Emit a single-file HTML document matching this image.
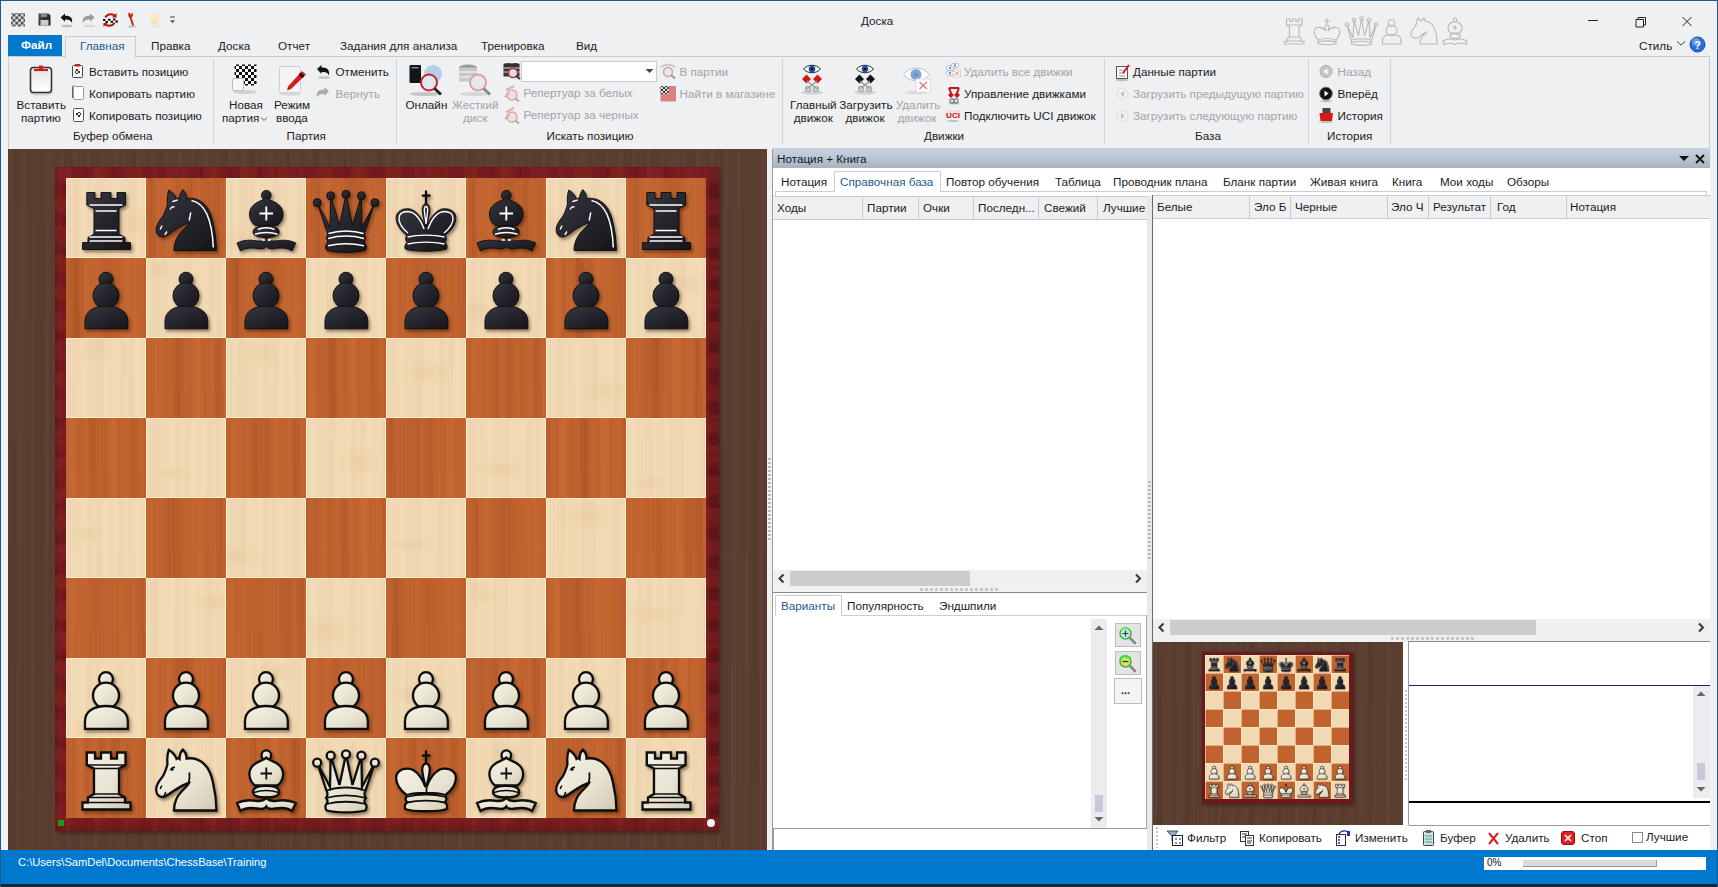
<!DOCTYPE html>
<html><head><meta charset="utf-8"><title>Доска</title>
<style>
*{margin:0;padding:0;box-sizing:border-box}
html,body{width:1718px;height:887px;overflow:hidden}
body{position:relative;background:#eff0f2;font-family:"Liberation Sans",sans-serif;font-size:11.7px;color:#1c1c1c;line-height:1}
.a{position:absolute}
.t{position:absolute;white-space:nowrap;margin-top:-0.7px}
.g{color:#a3a3a9}
/* window border */
#wb{left:0;top:0;width:1718px;height:887px;border:1px solid #1a5a8c;border-bottom:none;pointer-events:none;z-index:50}
/* ribbon */
#ribbon{left:8px;top:56px;width:1702px;height:93px;border:1px solid #c9cad2;border-bottom:none;background:#eff0f2}
.sep{position:absolute;top:66px;width:1px;height:78px;background:#d2d3da}
.glab{position:absolute;top:130px;white-space:nowrap;text-align:center}
/* wood */
.wood{background-color:#5a3d2f;background-image:repeating-linear-gradient(90deg,rgba(0,0,0,.035) 0 1px,transparent 1px 3px,rgba(255,220,190,.02) 3px 4px,transparent 4px 7px),repeating-linear-gradient(90.5deg,rgba(255,225,190,.02) 0 5px,transparent 5px 13px),repeating-linear-gradient(89.5deg,rgba(20,5,0,.035) 0 9px,transparent 9px 31px)}
#board{left:66px;top:178px;width:640px;height:640px;background-color:#f1d9b3;background-image:repeating-linear-gradient(90deg,rgba(190,140,90,.06) 0 1px,transparent 1px 5px,rgba(255,255,255,.07) 5px 7px,transparent 7px 11px),repeating-linear-gradient(91deg,rgba(200,150,110,.05) 0 13px,transparent 13px 29px)}
.sq{position:absolute;width:80px;height:80px}
.D{background-color:#c0632f;background-image:repeating-linear-gradient(90deg,rgba(110,30,0,.06) 0 2px,transparent 2px 7px,rgba(255,180,110,.05) 7px 9px,transparent 9px 13px),repeating-linear-gradient(89deg,rgba(255,170,100,.06) 0 9px,transparent 9px 23px,rgba(100,30,0,.07) 23px 31px,transparent 31px 43px)}
.pc{position:absolute;width:80px;height:80px}
.L{box-shadow:inset 0 0 0 1px rgba(255,243,210,.75)}
/* status */
#status{left:0;top:850px;width:1718px;height:34px;background:#0078ce}
#status2{left:0;top:884px;width:1718px;height:3px;background:#14283a}
</style></head><body>
<div class="a" id="wb"></div>

<!-- TITLE -->
<div class="t" style="left:861px;top:16px;font-size:11.7px">Доска</div>


<!-- QUICK ACCESS -->
<svg class="a" style="left:10px;top:11px" width="170" height="18" viewBox="0 0 170 18">
 <defs><pattern id="chk" width="4" height="4" patternUnits="userSpaceOnUse"><rect width="4" height="4" fill="#e8e8e8"/><rect width="2" height="2" fill="#333"/><rect x="2" y="2" width="2" height="2" fill="#333"/></pattern>
 <pattern id="chk3" width="6" height="6" patternUnits="userSpaceOnUse"><rect width="6" height="6" fill="#fff"/><rect width="3" height="3" fill="#111"/><rect x="3" y="3" width="3" height="3" fill="#111"/></pattern>
 <pattern id="chkq" width="5.4" height="5.4" patternUnits="userSpaceOnUse"><rect width="5.4" height="5.4" fill="#d6d6d6"/><rect width="2.7" height="2.7" fill="#555"/><rect x="2.7" y="2.7" width="2.7" height="2.7" fill="#555"/></pattern>
 <linearGradient id="flop" x1="0" y1="0" x2="1" y2="1"><stop offset="0" stop-color="#555"/><stop offset="1" stop-color="#111"/></linearGradient></defs>
 <rect x="1" y="2" width="14" height="13.5" fill="url(#chkq)"/>
 <path d="M28.5 2.5 H38.5 L40.5 4.5 V14.5 H28.5 Z" fill="url(#flop)"/><rect x="31" y="2.5" width="6" height="3.5" fill="#888"/><rect x="30.5" y="9" width="8" height="5.5" fill="#ccc"/>
 <path d="M50.5 6.5 L55 2.5 V4.8 C60 4.5 63 7 62 12 C61 9.5 58 8.3 55 8.7 V10.8 Z" fill="#111"/><ellipse cx="57" cy="15" rx="5.5" ry="1.3" fill="#000" opacity=".22"/>
 <path d="M84.5 6.5 L80 2.5 V4.8 C75 4.5 72 7 73 12 C74 9.5 77 8.3 80 8.7 V10.8 Z" fill="#9a9a9a"/><ellipse cx="79" cy="15" rx="5.5" ry="1.3" fill="#000" opacity=".1"/>
 <path d="M94.5 6 C96 2.5 101 1 105 3.5 L106.5 2 L106.5 6.5 L102 6.5 L103.5 5 C100.5 3.5 97.5 4.5 96.5 7 Z M105.5 12 C104 15.5 99 17 95 14.5 L93.5 16 L93.5 11.5 L98 11.5 L96.5 13 C99.5 14.5 102.5 13.5 103.5 11 Z" fill="#c41010"/>
 <path d="M92.5 8 L108.5 7 L109 11 L93 12 Z" fill="#fff"/><path d="M93 8 h2.5 v2 h-2.5z M98 7.8 h2.5 v2 h-2.5z M103 7.5 h2.5 v2 h-2.5z M95.5 10 h2.5 v2 h-2.5z M100.5 9.8 h2.5 v2 h-2.5z M105.5 9.5 h2.5 v2 h-2.5z" fill="#111"/>
 <path d="M118.5 2 L120 1.5 L120.5 4 L121.5 3.5 L121.8 1.5 L123 2.5 C123 4.5 122.5 6 121.5 6.5 L124 14 L122.2 14.8 L119.8 7 C118.5 6.5 118 4 118.5 2 Z" fill="#c81818"/><ellipse cx="122" cy="15.5" rx="4" ry="1" fill="#000" opacity=".2"/>
 <circle cx="144.7" cy="7" r="5" fill="#f6e9c4"/><path d="M141.5 10 L142.5 14 H147 L148 10 Z" fill="#f2e2b4"/><ellipse cx="144.7" cy="15.5" rx="6" ry=".8" fill="#000" opacity=".06"/>
 <path d="M160 6 H165" stroke="#555" stroke-width="1.1"/><path d="M160 9.3 H165 L162.5 12.2 Z" fill="#555"/>
</svg>
<!-- ghost pieces -->
<svg class="a" style="left:1283px;top:16px" width="190" height="30" viewBox="0 0 190 30" fill="none" stroke="#b9b9bc" stroke-width="1.1">
 <path d="M3.5 3 H7 V5.5 H9.5 V3 H13 V5.5 H15.5 V3 H19 V9 L16 11 V21 L18.5 23 V25.5 H21 V28 H1.5 V25.5 H4 V23 L6.5 21 V11 L3.5 9 Z M4 9 H18.5 M6.5 21 H16 M4 25 H18.5"/>
 <path d="M44 2 V9 M41 5 H47 M44 9 C46 9 46.5 12 45 15 C48 11 54 10 56 13 C58 16 56 20 53 24 V27.5 C46 29.5 42 29.5 35 27.5 V24 C32 20 30 16 32 13 C34 10 40 11 43 15 C41.5 12 42 9 44 9 Z M35 24 C41 22 47 22 53 24 M35 26 C41 24.5 47 24.5 53 26"/>
 <path d="M64 9 L70 22 L71 4.5 L75.5 19.5 L78.5 3 L81.5 19.5 L86 4.5 L87 22 L93 9 L88.5 25 V28 C81 30 76 30 68.5 28 V25 Z M69 24 C75 22.5 82 22.5 88 24 M69 26.5 C75 25 82 25 88 26.5"/>
 <circle cx="64" cy="8.5" r="1.8"/><circle cx="71" cy="4" r="1.8"/><circle cx="78.5" cy="2.5" r="1.8"/><circle cx="86" cy="4" r="1.8"/><circle cx="93" cy="8.5" r="1.8"/>
 <circle cx="108.5" cy="7" r="3.3"/><circle cx="108.5" cy="14.5" r="5.5"/><path d="M99.5 28 V24 C99.5 20 104 18.5 108.5 18.5 C113 18.5 118 20 118 24 V28 Z"/>
 <path d="M137 28 C137 23 140 19 144 16 C141 17 138 19 135 22 C132 23 128 21 128 18 C128 15 131 12 133 9 C134 6 134 4 135 2 L138 5 L141 2 L142 5 C150 6 154 14 154 28 Z"/>
 <circle cx="172" cy="4" r="1.8"/><path d="M167.5 17 C164 14 164 9 168.5 6.5 L172 5.5 L175.5 6.5 C180 9 180 14 176.5 17 Z M172 9 V14 M169.5 11.5 H174.5 M167 19 C170 17.5 174 17.5 177 19 V21 C174 22.5 170 22.5 167 21 Z M160 25 C164 22.5 168 22.5 172 24 C176 22.5 180 22.5 184 25 L183 28.5 C179 27 175 27 172 28.5 C169 27 165 27 161 28.5 Z"/>
</svg>
<!-- window controls -->
<svg class="a" style="left:1585px;top:14px" width="110" height="14" viewBox="0 0 110 14" stroke="#222" stroke-width="1" fill="none">
 <path d="M3 6.5 H13"/>
 <path d="M51 5.5 H58.5 V13 H51 Z M53 5.5 V3.5 H60.5 V11 H58.5"/>
 <path d="M97.5 3 L106.5 12 M106.5 3 L97.5 12"/>
</svg>
<div class="t" style="left:1639px;top:40.5px">Стиль</div>
<svg class="a" style="left:1676px;top:40px" width="10" height="7"><path d="M1 1.5 L5 5 L9 1.5" stroke="#444" stroke-width="1" fill="none"/></svg>
<svg class="a" style="left:1689px;top:36px" width="17" height="17" viewBox="0 0 17 17"><circle cx="8.5" cy="8.5" r="7.5" fill="#2a6ed8" stroke="#1a4aa0" stroke-width="1"/><circle cx="7" cy="6" r="4" fill="#9ec4ff" opacity=".5"/><text x="8.5" y="12.6" font-family="Liberation Sans" font-weight="bold" font-size="11" fill="#fff" text-anchor="middle">?</text></svg>

<!-- TABS -->
<div class="a" style="left:8px;top:35px;width:54px;height:21px;background:#0078ce;border-top:1px solid #1a70b0"></div>
<div class="t" style="left:21px;top:40px;color:#fff;font-weight:bold">Файл</div>
<div class="a" style="left:65px;top:36px;width:71px;height:22px;border:1px solid #c9cad2;border-bottom:none;background:#eff0f2;z-index:2"></div>
<div class="t" style="left:80px;top:41px;color:#1e5b94;z-index:3">Главная</div>
<div class="t" style="left:151px;top:41px">Правка</div>
<div class="t" style="left:218px;top:41px">Доска</div>
<div class="t" style="left:278px;top:41px">Отчет</div>
<div class="t" style="left:340px;top:41px">Задания для анализа</div>
<div class="t" style="left:481px;top:41px">Тренировка</div>
<div class="t" style="left:576px;top:41px">Вид</div>

<div class="a" id="ribbon"></div>


<!-- RIBBON CONTENT -->
<div class="a" style="left:9px;top:148px;width:1700px;height:1px;background:#f2f2f5"></div>
<div class="sep" style="left:213px;top:59px;height:85px"></div>
<div class="sep" style="left:396px;top:59px;height:85px"></div>
<div class="sep" style="left:782px;top:59px;height:85px"></div>
<div class="sep" style="left:1104px;top:59px;height:85px"></div>
<div class="sep" style="left:1308px;top:59px;height:85px"></div>
<div class="sep" style="left:1390px;top:59px;height:85px"></div>

<!-- group 1 -->
<svg class="a" style="left:26px;top:64px" width="30" height="32" viewBox="0 0 30 32">
 <ellipse cx="15" cy="29.5" rx="12" ry="2" fill="#000" opacity=".12"/>
 <rect x="4.5" y="3.5" width="21" height="25" rx="3" fill="#f6f6f6" stroke="#333" stroke-width="1.6"/>
 <rect x="6.5" y="5.5" width="17" height="21" rx="1.5" fill="url(#gclip)"/>
 <path d="M8 6 H22" stroke="#c82020" stroke-width="2.2"/><rect x="13" y="1.5" width="4" height="4" fill="#c82020"/>
 <defs><linearGradient id="gclip" x1="0" y1="0" x2="0" y2="1"><stop offset="0" stop-color="#e6e6e6"/><stop offset="1" stop-color="#fff"/></linearGradient></defs>
</svg>
<div class="t" style="left:16.5px;top:100px">Вставить</div>
<div class="t" style="left:21px;top:113px">партию</div>
<svg class="a" style="left:70px;top:63px" width="16" height="60" viewBox="0 0 16 60">
 <rect x="2.5" y="2.5" width="10" height="12" rx="1" fill="#fff" stroke="#444" stroke-width="1"/><rect x="5" y="1" width="5" height="2.5" fill="#c82020"/><rect x="5" y="6" width="5" height="5" fill="url(#chk)"/>
 <rect x="3.5" y="23.5" width="10" height="13" rx="1" fill="#fff" stroke="#999" stroke-width="1"/><path d="M2.5 35 V24 C2.5 23 3 22.5 4 22.5" stroke="#666" fill="none"/>
 <rect x="3.5" y="45.5" width="10" height="13" rx="1" fill="#fff" stroke="#555" stroke-width="1"/><rect x="6" y="49" width="5" height="5" fill="url(#chk)"/>
</svg>
<div class="t" style="left:89px;top:66.5px">Вставить позицию</div>
<div class="t" style="left:89px;top:88.5px">Копировать партию</div>
<div class="t" style="left:89px;top:110.5px">Копировать позицию</div>
<div class="t" style="left:73px;top:130.5px">Буфер обмена</div>

<!-- group 2 -->
<svg class="a" style="left:230px;top:63px" width="30" height="32" viewBox="0 0 30 32">
 <ellipse cx="15" cy="29" rx="12" ry="2" fill="#000" opacity=".12"/>
 <rect x="4.5" y="1.5" width="22" height="21" fill="url(#chk3)"/>
 <rect x="2.5" y="15.5" width="11" height="12" rx="1.5" fill="#f8f8f8" stroke="#bbb"/>
</svg>
<div class="t" style="left:229px;top:100px">Новая</div>
<div class="t" style="left:222px;top:113px">партия</div>
<svg class="a" style="left:260px;top:116px" width="8" height="6"><path d="M1 1.5 L4 4.5 L7 1.5" stroke="#555" stroke-width="1" fill="none"/></svg>
<svg class="a" style="left:276px;top:64px" width="32" height="32" viewBox="0 0 32 32">
 <ellipse cx="14" cy="30" rx="11" ry="1.6" fill="#000" opacity=".1"/>
 <rect x="3.5" y="2.5" width="21" height="26" rx="2" fill="#f4f4f4" stroke="#cfcfcf"/>
 <path d="M26 7 L30 10.5 L15 25 L11 26.5 L12 22.5 Z" fill="#d81818"/><path d="M23.5 9.5 L27.5 13" stroke="#111" stroke-width="2.5"/>
</svg>
<div class="t" style="left:274px;top:100px">Режим</div>
<div class="t" style="left:276px;top:113px">ввода</div>
<svg class="a" style="left:315px;top:63px" width="16" height="36" viewBox="0 0 16 36">
 <path d="M2 6 L6.5 2 V4.5 C12 4 15 7 14 12.5 C13 9.5 10 8.5 6.5 9 V11 Z" fill="#111"/><ellipse cx="9" cy="14.5" rx="6" ry="1.3" fill="#000" opacity=".2"/>
 <path d="M14 28 L9.5 24 V26.5 C4 26 1 29 2 34.5 C3 31.5 6 30.5 9.5 31 V33 Z" fill="#aaa"/>
</svg>
<div class="t" style="left:335.5px;top:66.5px">Отменить</div>
<div class="t g" style="left:335.5px;top:88.5px">Вернуть</div>
<div class="t" style="left:286.5px;top:130.5px">Партия</div>

<!-- group 3 -->
<svg class="a" style="left:405px;top:63px" width="42" height="34" viewBox="0 0 42 34">
 <ellipse cx="20" cy="31" rx="15" ry="2" fill="#000" opacity=".18"/>
 <rect x="4.5" y="2" width="11.5" height="18" rx="1" fill="#151515"/><rect x="6.5" y="4" width="7" height="1.5" fill="#6a8ab0"/>
 <circle cx="28" cy="11" r="9" fill="#a8c4e8" opacity=".8"/>
 <circle cx="24" cy="19.5" r="8" fill="#dfe6f0" stroke="#c02828" stroke-width="2"/><path d="M29.5 25.5 L36 31.5" stroke="#222" stroke-width="3"/>
</svg>
<div class="t" style="left:405.5px;top:100px">Онлайн</div>
<svg class="a" style="left:455px;top:63px" width="42" height="34" viewBox="0 0 42 34">
 <ellipse cx="20" cy="31" rx="15" ry="2" fill="#000" opacity=".1"/>
 <ellipse cx="13" cy="4.5" rx="9" ry="3" fill="#999"/><rect x="4" y="4.5" width="18" height="14" fill="#c8c8c8"/><path d="M4 9 H22 M4 14 H22" stroke="#fff" stroke-width="1"/>
 <circle cx="23" cy="19.5" r="8" fill="#e6e8ee" stroke="#e0a0a0" stroke-width="2"/><path d="M28.5 25.5 L35 31.5" stroke="#888" stroke-width="3"/>
</svg>
<div class="t g" style="left:452px;top:100px">Жесткий</div>
<div class="t g" style="left:463px;top:113px">диск</div>
<svg class="a" style="left:502px;top:62px" width="20" height="64" viewBox="0 0 20 64">
 <ellipse cx="6" cy="2.5" rx="4.5" ry="1.5" fill="#333"/><rect x="1.5" y="2.5" width="9" height="12" fill="#333"/><path d="M1.5 6 H10.5 M1.5 10 H10.5" stroke="#ddd"/>
 <ellipse cx="13" cy="2.5" rx="4.5" ry="1.5" fill="#333"/><rect x="8.5" y="2.5" width="9" height="12" fill="#333"/><path d="M8.5 6 H17.5 M8.5 10 H17.5" stroke="#ddd"/>
 <circle cx="11" cy="11" r="4.5" fill="#dde" stroke="#c03030" stroke-width="1.5"/><path d="M14 14 L18 17" stroke="#333" stroke-width="2"/>
 <circle cx="10" cy="33" r="5" fill="#f0e0e0" stroke="#e0a8a8" stroke-width="1.5"/><path d="M4 28 L12 24 M3 35 L7 31" stroke="#d8b0b0" stroke-width="2"/><path d="M13.5 36.5 L17 39.5" stroke="#aaa" stroke-width="2"/>
 <circle cx="10" cy="55" r="5" fill="#f0e0e0" stroke="#e0a8a8" stroke-width="1.5"/><path d="M4 50 L12 46 M3 57 L7 53" stroke="#d8b0b0" stroke-width="2"/><path d="M13.5 58.5 L17 61.5" stroke="#aaa" stroke-width="2"/>
</svg>
<div class="a" style="left:521px;top:61px;width:136px;height:21px;background:#fff;border:1px solid #c8c8ce"></div>
<svg class="a" style="left:645px;top:68px" width="9" height="6"><path d="M0.5 1 H8.5 L4.5 5 Z" fill="#444"/></svg>
<div class="t g" style="left:523.5px;top:88px">Репертуар за белых</div>
<div class="t g" style="left:523.5px;top:110px">Репертуар за черных</div>
<svg class="a" style="left:659px;top:63px" width="18" height="40" viewBox="0 0 18 40">
 <path d="M2 4 C6 1 12 1 16 4" stroke="#c8c8c8" stroke-width="2" fill="none"/><circle cx="9" cy="9" r="4.5" fill="#e8e8f0" stroke="#e0a0a0" stroke-width="1.5"/><path d="M12 12 L16 15.5" stroke="#999" stroke-width="2"/>
 <rect x="1.5" y="23" width="15.5" height="15.5" fill="#d98284"/><rect x="1.5" y="23" width="8" height="8" fill="url(#chk)"/>
</svg>
<div class="t g" style="left:679.5px;top:66.5px">В партии</div>
<div class="t g" style="left:679.5px;top:88.5px">Найти в магазине</div>
<div class="t" style="left:546.5px;top:130.5px">Искать позицию</div>

<!-- group 4 -->
<svg class="a" style="left:798px;top:62px" width="150" height="34" viewBox="0 0 150 34">
 <ellipse cx="14" cy="30.5" rx="11" ry="2" fill="#000" opacity=".13"/>
 <path d="M5.5 7 C10 2 18 2 22.5 7 C18 12 10 12 5.5 7 Z" fill="#fff" stroke="#222" stroke-width="1"/><circle cx="14" cy="7" r="3.3" fill="#1d4fa0"/><circle cx="14" cy="7" r="1.2" fill="#000"/>
 <path d="M4 17 L8.5 12.5 L13 17 L8.5 21.5 Z M15 17 L19.5 12.5 L24 17 L19.5 21.5 Z" fill="#d01818"/>
 <path d="M9 19 L19 27 M19 19 L9 27" stroke="#999" stroke-width="1.5"/><circle cx="10" cy="27" r="2.4" fill="none" stroke="#aaa" stroke-width="1.5"/><circle cx="18" cy="27" r="2.4" fill="none" stroke="#aaa" stroke-width="1.5"/>
 <g transform="translate(53 0)">
 <ellipse cx="14" cy="30.5" rx="11" ry="2" fill="#000" opacity=".13"/>
 <path d="M5.5 7 C10 2 18 2 22.5 7 C18 12 10 12 5.5 7 Z" fill="#fff" stroke="#222" stroke-width="1"/><circle cx="14" cy="7" r="3.3" fill="#1d4fa0"/><circle cx="14" cy="7" r="1.2" fill="#000"/>
 <path d="M4 17 L8.5 12.5 L13 17 L8.5 21.5 Z M15 17 L19.5 12.5 L24 17 L19.5 21.5 Z" fill="#151515"/>
 <path d="M9 19 L19 27 M19 19 L9 27" stroke="#999" stroke-width="1.5"/><circle cx="10" cy="27" r="2.4" fill="none" stroke="#aaa" stroke-width="1.5"/><circle cx="18" cy="27" r="2.4" fill="none" stroke="#aaa" stroke-width="1.5"/>
 </g>
 <g transform="translate(103 0)">
 <ellipse cx="15" cy="30.5" rx="11" ry="2" fill="#000" opacity=".08"/>
 <path d="M2.5 12.5 C9 4 22 4 28.5 12.5 C22 21 9 21 2.5 12.5 Z" fill="#fff" stroke="#b8c0cc" stroke-width="1"/><circle cx="15" cy="12.5" r="5.5" fill="#7ea6e0"/><circle cx="15" cy="12.5" r="2" fill="#888"/>
 <rect x="15" y="17" width="14.5" height="13" fill="#fff" stroke="#ddd"/><path d="M18.5 20 L26 27 M26 20 L18.5 27" stroke="#e07070" stroke-width="1.2"/>
 </g>
</svg>
<div class="t" style="left:790px;top:100px">Главный</div>
<div class="t" style="left:793.8px;top:113px">движок</div>
<div class="t" style="left:839.2px;top:100px">Загрузить</div>
<div class="t" style="left:845.5px;top:113px">движок</div>
<div class="t g" style="left:895.7px;top:100px">Удалить</div>
<div class="t g" style="left:897.5px;top:113px">движок</div>
<svg class="a" style="left:944px;top:63px" width="18" height="60" viewBox="0 0 18 60">
 <ellipse cx="6" cy="5" rx="4" ry="2.5" fill="#fff" stroke="#aac" stroke-width=".8"/><circle cx="6" cy="5" r="1.2" fill="#7090c8"/>
 <ellipse cx="11" cy="2.5" rx="4" ry="2.3" fill="#fff" stroke="#aac" stroke-width=".8"/><circle cx="11" cy="2.5" r="1.2" fill="#7090c8"/>
 <ellipse cx="6" cy="10" rx="4" ry="2.5" fill="#fff" stroke="#aac" stroke-width=".8"/><circle cx="6" cy="10" r="1.2" fill="#7090c8"/>
 <rect x="9.5" y="7" width="7" height="7" fill="#fff" stroke="#e8c0c0" stroke-width=".8"/><path d="M11 8.5 L15 12.5 M15 8.5 L11 12.5" stroke="#e07070"/>
 <path d="M5 25 H15 M5 25 L7 30 M15 25 L13 30" stroke="#c01818" stroke-width="2"/><path d="M4 32 L7 29 L10 32 L7 35 Z M10 32 L13 29 L16 32 L13 35 Z" fill="#c01818"/><circle cx="8" cy="38" r="2" fill="none" stroke="#888" stroke-width="1.4"/><circle cx="12" cy="38" r="2" fill="none" stroke="#888" stroke-width="1.4"/><ellipse cx="10" cy="40.5" rx="6" ry="1.2" fill="#000" opacity=".15"/>
 <rect x="1" y="47" width="16" height="8" fill="#f4e0e0" rx="1"/><text x="9" y="54.5" font-family="Liberation Sans" font-weight="bold" font-size="8" fill="#c01818" text-anchor="middle">UCI</text><ellipse cx="9" cy="58" rx="6" ry="1.2" fill="#000" opacity=".2"/>
</svg>
<div class="t g" style="left:964px;top:66.5px">Удалить все движки</div>
<div class="t" style="left:964px;top:88.5px">Управление движками</div>
<div class="t" style="left:964px;top:110.5px">Подключить UCI движок</div>
<div class="t" style="left:924px;top:130.5px">Движки</div>

<!-- group 5 -->
<svg class="a" style="left:1114px;top:63px" width="18" height="60" viewBox="0 0 18 60">
 <rect x="2.5" y="3.5" width="11" height="12" fill="#fafafa" stroke="#555"/><path d="M5 7 H9 M5 10 H11 M5 13 H11" stroke="#999"/><path d="M9 10 L15 2" stroke="#d01818" stroke-width="2"/><ellipse cx="8" cy="17" rx="6" ry="1.3" fill="#000" opacity=".2"/>
 <circle cx="8.5" cy="31" r="5.5" fill="#f0f0f2" stroke="#ddd"/><path d="M10 28 L6.5 31 L10 34 Z" fill="#bbb"/>
 <circle cx="8.5" cy="53" r="5.5" fill="#f0f0f2" stroke="#ddd"/><path d="M7 50 L10.5 53 L7 56 Z" fill="#bbb"/>
</svg>
<div class="t" style="left:1133px;top:66.5px">Данные партии</div>
<div class="t g" style="left:1133px;top:88.5px">Загрузить предыдущую партию</div>
<div class="t g" style="left:1133px;top:110.5px">Загрузить следующую партию</div>
<div class="t" style="left:1195px;top:130.5px">База</div>

<!-- group 6 -->
<svg class="a" style="left:1318px;top:63px" width="18" height="60" viewBox="0 0 18 60">
 <circle cx="8" cy="8.5" r="6" fill="#c8c8c8" stroke="#aaa"/><path d="M9.5 5.5 L5.5 8.5 L9.5 11.5 Z" fill="#fff"/>
 <circle cx="8" cy="30.5" r="6.3" fill="#111" stroke="#666"/><path d="M6.5 27.5 L10.5 30.5 L6.5 33.5 Z" fill="#fff"/><ellipse cx="8" cy="38" rx="6" ry="1.2" fill="#000" opacity=".2"/>
 <path d="M1.5 50 H15 L14 58 H2.5 Z" fill="#d81818"/><rect x="4.5" y="45" width="8" height="5" fill="#444"/><ellipse cx="8" cy="59" rx="7" ry="1.2" fill="#000" opacity=".2"/>
</svg>
<div class="t g" style="left:1337.5px;top:66.5px">Назад</div>
<div class="t" style="left:1337.5px;top:88.5px">Вперёд</div>
<div class="t" style="left:1337.5px;top:110.5px">История</div>
<div class="t" style="left:1327px;top:130.5px">История</div>

<!-- BOARD AREA -->
<div class="a wood" style="left:8px;top:149px;width:759px;height:701px"></div>
<div class="a" style="left:55px;top:167px;width:664px;height:664px;background-color:#731b1e;background-image:radial-gradient(circle at 20% 30%,rgba(150,40,35,.35) 0 6px,transparent 12px),radial-gradient(circle at 70% 80%,rgba(40,0,5,.25) 0 5px,transparent 10px),repeating-linear-gradient(90deg,rgba(40,0,0,.10) 0 3px,transparent 3px 11px,rgba(255,90,60,.07) 11px 16px,transparent 16px 29px),repeating-linear-gradient(0deg,rgba(40,0,0,.08) 0 5px,transparent 5px 17px);background-size:37px 29px,23px 31px,auto,auto;box-shadow:2px 3px 4px -1px rgba(0,0,0,.4)"></div>
<div class="a" id="board"><div class="sq L" style="left:0px;top:0px;background-image:radial-gradient(ellipse 32px 15px at 65px 45px,rgba(190,140,80,.10),transparent)"></div><div class="sq D" style="left:80px;top:0px;background-image:linear-gradient(90deg,transparent 52px,rgba(90,25,0,0.09) 64px,transparent 78px),repeating-linear-gradient(90deg,rgba(110,30,0,.06) 0 2px,transparent 2px 7px,rgba(255,180,110,.05) 7px 9px,transparent 9px 13px),repeating-linear-gradient(89deg,rgba(255,170,100,.06) 0 9px,transparent 9px 23px,rgba(100,30,0,.07) 23px 31px,transparent 31px 43px);background-position:0 0,32px 0,16px 0"></div><div class="sq L" style="left:160px;top:0px;background-image:radial-gradient(ellipse 34px 15px at 21px 61px,rgba(190,140,80,.10),transparent)"></div><div class="sq D" style="left:240px;top:0px;background-image:linear-gradient(90deg,transparent 37px,rgba(90,25,0,0.05) 49px,transparent 63px),repeating-linear-gradient(90deg,rgba(110,30,0,.06) 0 2px,transparent 2px 7px,rgba(255,180,110,.05) 7px 9px,transparent 9px 13px),repeating-linear-gradient(89deg,rgba(255,170,100,.06) 0 9px,transparent 9px 23px,rgba(100,30,0,.07) 23px 31px,transparent 31px 43px);background-position:0 0,40px 0,20px 0"></div><div class="sq L" style="left:320px;top:0px;background-image:radial-gradient(ellipse 22px 9px at 38px 29px,rgba(190,140,80,.10),transparent)"></div><div class="sq D" style="left:400px;top:0px;background-image:linear-gradient(90deg,transparent 49px,rgba(90,25,0,0.09) 61px,transparent 75px),repeating-linear-gradient(90deg,rgba(110,30,0,.06) 0 2px,transparent 2px 7px,rgba(255,180,110,.05) 7px 9px,transparent 9px 13px),repeating-linear-gradient(89deg,rgba(255,170,100,.06) 0 9px,transparent 9px 23px,rgba(100,30,0,.07) 23px 31px,transparent 31px 43px);background-position:0 0,34px 0,17px 0"></div><div class="sq L" style="left:480px;top:0px;background-image:radial-gradient(ellipse 30px 15px at 12px 48px,rgba(190,140,80,.10),transparent)"></div><div class="sq D" style="left:560px;top:0px;background-image:linear-gradient(90deg,transparent 39px,rgba(90,25,0,0.05) 51px,transparent 65px),repeating-linear-gradient(90deg,rgba(110,30,0,.06) 0 2px,transparent 2px 7px,rgba(255,180,110,.05) 7px 9px,transparent 9px 13px),repeating-linear-gradient(89deg,rgba(255,170,100,.06) 0 9px,transparent 9px 23px,rgba(100,30,0,.07) 23px 31px,transparent 31px 43px);background-position:0 0,39px 0,19px 0"></div><div class="sq D" style="left:0px;top:80px;background-image:linear-gradient(90deg,transparent -2px,rgba(90,25,0,0.09) 10px,transparent 24px),repeating-linear-gradient(90deg,rgba(110,30,0,.06) 0 2px,transparent 2px 7px,rgba(255,180,110,.05) 7px 9px,transparent 9px 13px),repeating-linear-gradient(89deg,rgba(255,170,100,.06) 0 9px,transparent 9px 23px,rgba(100,30,0,.07) 23px 31px,transparent 31px 43px);background-position:0 0,39px 0,19px 0"></div><div class="sq L" style="left:80px;top:80px;background-image:radial-gradient(ellipse 24px 11px at 13px 12px,rgba(190,140,80,.10),transparent)"></div><div class="sq D" style="left:160px;top:80px;background-image:linear-gradient(90deg,transparent -1px,rgba(90,25,0,0.07) 11px,transparent 25px),repeating-linear-gradient(90deg,rgba(110,30,0,.06) 0 2px,transparent 2px 7px,rgba(255,180,110,.05) 7px 9px,transparent 9px 13px),repeating-linear-gradient(89deg,rgba(255,170,100,.06) 0 9px,transparent 9px 23px,rgba(100,30,0,.07) 23px 31px,transparent 31px 43px);background-position:0 0,38px 0,19px 0"></div><div class="sq L" style="left:240px;top:80px;background-image:radial-gradient(ellipse 24px 16px at 38px 47px,rgba(190,140,80,.10),transparent)"></div><div class="sq D" style="left:320px;top:80px;background-image:linear-gradient(90deg,transparent 38px,rgba(90,25,0,0.07) 50px,transparent 64px),repeating-linear-gradient(90deg,rgba(110,30,0,.06) 0 2px,transparent 2px 7px,rgba(255,180,110,.05) 7px 9px,transparent 9px 13px),repeating-linear-gradient(89deg,rgba(255,170,100,.06) 0 9px,transparent 9px 23px,rgba(100,30,0,.07) 23px 31px,transparent 31px 43px);background-position:0 0,14px 0,7px 0"></div><div class="sq L" style="left:400px;top:80px;background-image:radial-gradient(ellipse 20px 15px at 10px 52px,rgba(190,140,80,.10),transparent)"></div><div class="sq D" style="left:480px;top:80px;background-image:linear-gradient(90deg,transparent 24px,rgba(90,25,0,0.09) 36px,transparent 50px),repeating-linear-gradient(90deg,rgba(110,30,0,.06) 0 2px,transparent 2px 7px,rgba(255,180,110,.05) 7px 9px,transparent 9px 13px),repeating-linear-gradient(89deg,rgba(255,170,100,.06) 0 9px,transparent 9px 23px,rgba(100,30,0,.07) 23px 31px,transparent 31px 43px);background-position:0 0,17px 0,8px 0"></div><div class="sq L" style="left:560px;top:80px;background-image:radial-gradient(ellipse 28px 11px at 55px 26px,rgba(190,140,80,.10),transparent)"></div><div class="sq L" style="left:0px;top:160px;background-image:radial-gradient(ellipse 20px 17px at 28px 11px,rgba(190,140,80,.10),transparent)"></div><div class="sq D" style="left:80px;top:160px;background-image:linear-gradient(90deg,transparent 23px,rgba(90,25,0,0.05) 35px,transparent 49px),repeating-linear-gradient(90deg,rgba(110,30,0,.06) 0 2px,transparent 2px 7px,rgba(255,180,110,.05) 7px 9px,transparent 9px 13px),repeating-linear-gradient(89deg,rgba(255,170,100,.06) 0 9px,transparent 9px 23px,rgba(100,30,0,.07) 23px 31px,transparent 31px 43px);background-position:0 0,6px 0,3px 0"></div><div class="sq L" style="left:160px;top:160px;background-image:radial-gradient(ellipse 18px 18px at 34px 14px,rgba(190,140,80,.10),transparent)"></div><div class="sq D" style="left:240px;top:160px;background-image:linear-gradient(90deg,transparent 11px,rgba(90,25,0,0.05) 23px,transparent 37px),repeating-linear-gradient(90deg,rgba(110,30,0,.06) 0 2px,transparent 2px 7px,rgba(255,180,110,.05) 7px 9px,transparent 9px 13px),repeating-linear-gradient(89deg,rgba(255,170,100,.06) 0 9px,transparent 9px 23px,rgba(100,30,0,.07) 23px 31px,transparent 31px 43px);background-position:0 0,0px 0,0px 0"></div><div class="sq L" style="left:320px;top:160px;background-image:radial-gradient(ellipse 30px 14px at 40px 34px,rgba(190,140,80,.10),transparent)"></div><div class="sq D" style="left:400px;top:160px;background-image:linear-gradient(90deg,transparent 34px,rgba(90,25,0,0.09) 46px,transparent 60px),repeating-linear-gradient(90deg,rgba(110,30,0,.06) 0 2px,transparent 2px 7px,rgba(255,180,110,.05) 7px 9px,transparent 9px 13px),repeating-linear-gradient(89deg,rgba(255,170,100,.06) 0 9px,transparent 9px 23px,rgba(100,30,0,.07) 23px 31px,transparent 31px 43px);background-position:0 0,4px 0,2px 0"></div><div class="sq L" style="left:480px;top:160px;background-image:radial-gradient(ellipse 26px 13px at 59px 53px,rgba(190,140,80,.10),transparent)"></div><div class="sq D" style="left:560px;top:160px;background-image:linear-gradient(90deg,transparent 17px,rgba(90,25,0,0.07) 29px,transparent 43px),repeating-linear-gradient(90deg,rgba(110,30,0,.06) 0 2px,transparent 2px 7px,rgba(255,180,110,.05) 7px 9px,transparent 9px 13px),repeating-linear-gradient(89deg,rgba(255,170,100,.06) 0 9px,transparent 9px 23px,rgba(100,30,0,.07) 23px 31px,transparent 31px 43px);background-position:0 0,5px 0,2px 0"></div><div class="sq D" style="left:0px;top:240px;background-image:linear-gradient(90deg,transparent 24px,rgba(90,25,0,0.05) 36px,transparent 50px),repeating-linear-gradient(90deg,rgba(110,30,0,.06) 0 2px,transparent 2px 7px,rgba(255,180,110,.05) 7px 9px,transparent 9px 13px),repeating-linear-gradient(89deg,rgba(255,170,100,.06) 0 9px,transparent 9px 23px,rgba(100,30,0,.07) 23px 31px,transparent 31px 43px);background-position:0 0,0px 0,0px 0"></div><div class="sq L" style="left:80px;top:240px;background-image:radial-gradient(ellipse 21px 8px at 25px 55px,rgba(190,140,80,.10),transparent)"></div><div class="sq D" style="left:160px;top:240px;background-image:linear-gradient(90deg,transparent 27px,rgba(90,25,0,0.07) 39px,transparent 53px),repeating-linear-gradient(90deg,rgba(110,30,0,.06) 0 2px,transparent 2px 7px,rgba(255,180,110,.05) 7px 9px,transparent 9px 13px),repeating-linear-gradient(89deg,rgba(255,170,100,.06) 0 9px,transparent 9px 23px,rgba(100,30,0,.07) 23px 31px,transparent 31px 43px);background-position:0 0,3px 0,1px 0"></div><div class="sq L" style="left:240px;top:240px;background-image:radial-gradient(ellipse 24px 15px at 53px 45px,rgba(190,140,80,.10),transparent)"></div><div class="sq D" style="left:320px;top:240px;background-image:linear-gradient(90deg,transparent 10px,rgba(90,25,0,0.09) 22px,transparent 36px),repeating-linear-gradient(90deg,rgba(110,30,0,.06) 0 2px,transparent 2px 7px,rgba(255,180,110,.05) 7px 9px,transparent 9px 13px),repeating-linear-gradient(89deg,rgba(255,170,100,.06) 0 9px,transparent 9px 23px,rgba(100,30,0,.07) 23px 31px,transparent 31px 43px);background-position:0 0,32px 0,16px 0"></div><div class="sq L" style="left:400px;top:240px;background-image:radial-gradient(ellipse 30px 9px at 36px 51px,rgba(190,140,80,.10),transparent)"></div><div class="sq D" style="left:480px;top:240px;background-image:linear-gradient(90deg,transparent 24px,rgba(90,25,0,0.05) 36px,transparent 50px),repeating-linear-gradient(90deg,rgba(110,30,0,.06) 0 2px,transparent 2px 7px,rgba(255,180,110,.05) 7px 9px,transparent 9px 13px),repeating-linear-gradient(89deg,rgba(255,170,100,.06) 0 9px,transparent 9px 23px,rgba(100,30,0,.07) 23px 31px,transparent 31px 43px);background-position:0 0,25px 0,12px 0"></div><div class="sq L" style="left:560px;top:240px;background-image:radial-gradient(ellipse 27px 8px at 27px 65px,rgba(190,140,80,.10),transparent)"></div><div class="sq L" style="left:0px;top:320px;background-image:radial-gradient(ellipse 21px 8px at 21px 35px,rgba(190,140,80,.10),transparent)"></div><div class="sq D" style="left:80px;top:320px;background-image:linear-gradient(90deg,transparent 11px,rgba(90,25,0,0.07) 23px,transparent 37px),repeating-linear-gradient(90deg,rgba(110,30,0,.06) 0 2px,transparent 2px 7px,rgba(255,180,110,.05) 7px 9px,transparent 9px 13px),repeating-linear-gradient(89deg,rgba(255,170,100,.06) 0 9px,transparent 9px 23px,rgba(100,30,0,.07) 23px 31px,transparent 31px 43px);background-position:0 0,9px 0,4px 0"></div><div class="sq L" style="left:160px;top:320px;background-image:radial-gradient(ellipse 28px 12px at 10px 59px,rgba(190,140,80,.10),transparent)"></div><div class="sq D" style="left:240px;top:320px;background-image:linear-gradient(90deg,transparent 2px,rgba(90,25,0,0.05) 14px,transparent 28px),repeating-linear-gradient(90deg,rgba(110,30,0,.06) 0 2px,transparent 2px 7px,rgba(255,180,110,.05) 7px 9px,transparent 9px 13px),repeating-linear-gradient(89deg,rgba(255,170,100,.06) 0 9px,transparent 9px 23px,rgba(100,30,0,.07) 23px 31px,transparent 31px 43px);background-position:0 0,24px 0,12px 0"></div><div class="sq L" style="left:320px;top:320px;background-image:radial-gradient(ellipse 25px 8px at 23px 47px,rgba(190,140,80,.10),transparent)"></div><div class="sq D" style="left:400px;top:320px;background-image:linear-gradient(90deg,transparent 21px,rgba(90,25,0,0.07) 33px,transparent 47px),repeating-linear-gradient(90deg,rgba(110,30,0,.06) 0 2px,transparent 2px 7px,rgba(255,180,110,.05) 7px 9px,transparent 9px 13px),repeating-linear-gradient(89deg,rgba(255,170,100,.06) 0 9px,transparent 9px 23px,rgba(100,30,0,.07) 23px 31px,transparent 31px 43px);background-position:0 0,38px 0,19px 0"></div><div class="sq L" style="left:480px;top:320px;background-image:radial-gradient(ellipse 33px 17px at 39px 18px,rgba(190,140,80,.10),transparent)"></div><div class="sq D" style="left:560px;top:320px;background-image:linear-gradient(90deg,transparent 53px,rgba(90,25,0,0.07) 65px,transparent 79px),repeating-linear-gradient(90deg,rgba(110,30,0,.06) 0 2px,transparent 2px 7px,rgba(255,180,110,.05) 7px 9px,transparent 9px 13px),repeating-linear-gradient(89deg,rgba(255,170,100,.06) 0 9px,transparent 9px 23px,rgba(100,30,0,.07) 23px 31px,transparent 31px 43px);background-position:0 0,8px 0,4px 0"></div><div class="sq D" style="left:0px;top:400px;background-image:linear-gradient(90deg,transparent 38px,rgba(90,25,0,0.05) 50px,transparent 64px),repeating-linear-gradient(90deg,rgba(110,30,0,.06) 0 2px,transparent 2px 7px,rgba(255,180,110,.05) 7px 9px,transparent 9px 13px),repeating-linear-gradient(89deg,rgba(255,170,100,.06) 0 9px,transparent 9px 23px,rgba(100,30,0,.07) 23px 31px,transparent 31px 43px);background-position:0 0,11px 0,5px 0"></div><div class="sq L" style="left:80px;top:400px;background-image:radial-gradient(ellipse 25px 11px at 68px 24px,rgba(190,140,80,.10),transparent)"></div><div class="sq D" style="left:160px;top:400px;background-image:linear-gradient(90deg,transparent 45px,rgba(90,25,0,0.09) 57px,transparent 71px),repeating-linear-gradient(90deg,rgba(110,30,0,.06) 0 2px,transparent 2px 7px,rgba(255,180,110,.05) 7px 9px,transparent 9px 13px),repeating-linear-gradient(89deg,rgba(255,170,100,.06) 0 9px,transparent 9px 23px,rgba(100,30,0,.07) 23px 31px,transparent 31px 43px);background-position:0 0,10px 0,5px 0"></div><div class="sq L" style="left:240px;top:400px;background-image:radial-gradient(ellipse 30px 15px at 22px 53px,rgba(190,140,80,.10),transparent)"></div><div class="sq D" style="left:320px;top:400px;background-image:linear-gradient(90deg,transparent 3px,rgba(90,25,0,0.07) 15px,transparent 29px),repeating-linear-gradient(90deg,rgba(110,30,0,.06) 0 2px,transparent 2px 7px,rgba(255,180,110,.05) 7px 9px,transparent 9px 13px),repeating-linear-gradient(89deg,rgba(255,170,100,.06) 0 9px,transparent 9px 23px,rgba(100,30,0,.07) 23px 31px,transparent 31px 43px);background-position:0 0,38px 0,19px 0"></div><div class="sq L" style="left:400px;top:400px;background-image:radial-gradient(ellipse 19px 16px at 16px 16px,rgba(190,140,80,.10),transparent)"></div><div class="sq D" style="left:480px;top:400px;background-image:linear-gradient(90deg,transparent 13px,rgba(90,25,0,0.09) 25px,transparent 39px),repeating-linear-gradient(90deg,rgba(110,30,0,.06) 0 2px,transparent 2px 7px,rgba(255,180,110,.05) 7px 9px,transparent 9px 13px),repeating-linear-gradient(89deg,rgba(255,170,100,.06) 0 9px,transparent 9px 23px,rgba(100,30,0,.07) 23px 31px,transparent 31px 43px);background-position:0 0,16px 0,8px 0"></div><div class="sq L" style="left:560px;top:400px;background-image:radial-gradient(ellipse 33px 12px at 26px 36px,rgba(190,140,80,.10),transparent)"></div><div class="sq L" style="left:0px;top:480px;background-image:radial-gradient(ellipse 20px 10px at 21px 69px,rgba(190,140,80,.10),transparent)"></div><div class="sq D" style="left:80px;top:480px;background-image:linear-gradient(90deg,transparent 28px,rgba(90,25,0,0.09) 40px,transparent 54px),repeating-linear-gradient(90deg,rgba(110,30,0,.06) 0 2px,transparent 2px 7px,rgba(255,180,110,.05) 7px 9px,transparent 9px 13px),repeating-linear-gradient(89deg,rgba(255,170,100,.06) 0 9px,transparent 9px 23px,rgba(100,30,0,.07) 23px 31px,transparent 31px 43px);background-position:0 0,14px 0,7px 0"></div><div class="sq L" style="left:160px;top:480px;background-image:radial-gradient(ellipse 26px 11px at 49px 14px,rgba(190,140,80,.10),transparent)"></div><div class="sq D" style="left:240px;top:480px;background-image:linear-gradient(90deg,transparent 45px,rgba(90,25,0,0.05) 57px,transparent 71px),repeating-linear-gradient(90deg,rgba(110,30,0,.06) 0 2px,transparent 2px 7px,rgba(255,180,110,.05) 7px 9px,transparent 9px 13px),repeating-linear-gradient(89deg,rgba(255,170,100,.06) 0 9px,transparent 9px 23px,rgba(100,30,0,.07) 23px 31px,transparent 31px 43px);background-position:0 0,13px 0,6px 0"></div><div class="sq L" style="left:320px;top:480px;background-image:radial-gradient(ellipse 32px 11px at 27px 36px,rgba(190,140,80,.10),transparent)"></div><div class="sq D" style="left:400px;top:480px;background-image:linear-gradient(90deg,transparent 0px,rgba(90,25,0,0.05) 12px,transparent 26px),repeating-linear-gradient(90deg,rgba(110,30,0,.06) 0 2px,transparent 2px 7px,rgba(255,180,110,.05) 7px 9px,transparent 9px 13px),repeating-linear-gradient(89deg,rgba(255,170,100,.06) 0 9px,transparent 9px 23px,rgba(100,30,0,.07) 23px 31px,transparent 31px 43px);background-position:0 0,3px 0,1px 0"></div><div class="sq L" style="left:480px;top:480px;background-image:radial-gradient(ellipse 22px 9px at 33px 43px,rgba(190,140,80,.10),transparent)"></div><div class="sq D" style="left:560px;top:480px;background-image:linear-gradient(90deg,transparent 6px,rgba(90,25,0,0.07) 18px,transparent 32px),repeating-linear-gradient(90deg,rgba(110,30,0,.06) 0 2px,transparent 2px 7px,rgba(255,180,110,.05) 7px 9px,transparent 9px 13px),repeating-linear-gradient(89deg,rgba(255,170,100,.06) 0 9px,transparent 9px 23px,rgba(100,30,0,.07) 23px 31px,transparent 31px 43px);background-position:0 0,23px 0,11px 0"></div><div class="sq D" style="left:0px;top:560px;background-image:linear-gradient(90deg,transparent 40px,rgba(90,25,0,0.09) 52px,transparent 66px),repeating-linear-gradient(90deg,rgba(110,30,0,.06) 0 2px,transparent 2px 7px,rgba(255,180,110,.05) 7px 9px,transparent 9px 13px),repeating-linear-gradient(89deg,rgba(255,170,100,.06) 0 9px,transparent 9px 23px,rgba(100,30,0,.07) 23px 31px,transparent 31px 43px);background-position:0 0,21px 0,10px 0"></div><div class="sq L" style="left:80px;top:560px;background-image:radial-gradient(ellipse 22px 17px at 47px 70px,rgba(190,140,80,.10),transparent)"></div><div class="sq D" style="left:160px;top:560px;background-image:linear-gradient(90deg,transparent 57px,rgba(90,25,0,0.05) 69px,transparent 83px),repeating-linear-gradient(90deg,rgba(110,30,0,.06) 0 2px,transparent 2px 7px,rgba(255,180,110,.05) 7px 9px,transparent 9px 13px),repeating-linear-gradient(89deg,rgba(255,170,100,.06) 0 9px,transparent 9px 23px,rgba(100,30,0,.07) 23px 31px,transparent 31px 43px);background-position:0 0,2px 0,1px 0"></div><div class="sq L" style="left:240px;top:560px;background-image:radial-gradient(ellipse 27px 8px at 68px 32px,rgba(190,140,80,.10),transparent)"></div><div class="sq D" style="left:320px;top:560px;background-image:linear-gradient(90deg,transparent 36px,rgba(90,25,0,0.09) 48px,transparent 62px),repeating-linear-gradient(90deg,rgba(110,30,0,.06) 0 2px,transparent 2px 7px,rgba(255,180,110,.05) 7px 9px,transparent 9px 13px),repeating-linear-gradient(89deg,rgba(255,170,100,.06) 0 9px,transparent 9px 23px,rgba(100,30,0,.07) 23px 31px,transparent 31px 43px);background-position:0 0,1px 0,0px 0"></div><div class="sq L" style="left:400px;top:560px;background-image:radial-gradient(ellipse 27px 13px at 40px 14px,rgba(190,140,80,.10),transparent)"></div><div class="sq D" style="left:480px;top:560px;background-image:linear-gradient(90deg,transparent 2px,rgba(90,25,0,0.05) 14px,transparent 28px),repeating-linear-gradient(90deg,rgba(110,30,0,.06) 0 2px,transparent 2px 7px,rgba(255,180,110,.05) 7px 9px,transparent 9px 13px),repeating-linear-gradient(89deg,rgba(255,170,100,.06) 0 9px,transparent 9px 23px,rgba(100,30,0,.07) 23px 31px,transparent 31px 43px);background-position:0 0,8px 0,4px 0"></div><div class="sq L" style="left:560px;top:560px;background-image:radial-gradient(ellipse 19px 10px at 44px 33px,rgba(190,140,80,.10),transparent)"></div></div>
<svg class="a" style="left:66px;top:178px" width="640" height="640" viewBox="0 0 640 640"><defs>
<filter id="sh" x="-20%" y="-20%" width="150%" height="150%"><feDropShadow dx="1.6" dy="2.2" stdDeviation="1.7" flood-color="#2a1000" flood-opacity=".5"/></filter>
<linearGradient id="bk" x1="0" y1="0" x2="1" y2="1"><stop offset="0" stop-color="#383842"/><stop offset="1" stop-color="#141418"/></linearGradient>
<linearGradient id="wh" x1="0" y1="0" x2="1" y2="1"><stop offset="0" stop-color="#f6f3e8"/><stop offset=".6" stop-color="#e8e3d0"/><stop offset="1" stop-color="#cfc9b2"/></linearGradient>
<g id="P"><circle cx="40" cy="21.2" r="7"/><circle cx="40" cy="37.6" r="13"/><path d="M19 70.8 V63 C19 53 28.5 48 40 48 C51.5 48 61.8 53 61.8 63 V70.8 Z"/></g>
<path id="R" d="M20.8 14.5 H29 V20.5 H35 V14.5 H45 V20.5 H51 V14.5 H59.5 V27 L53 30.5 V56 L59 59.5 V64.5 H64.5 V71.5 H16.5 V64.5 H22 V59.5 L28 56 V30.5 L20.8 27 Z"/>
<path id="N" d="M28 72.5 C28 65 31 58 36 53 C39 50 41.5 48 43 45 C38 46 32 50 26 54 C22 57 19 59 16 59 C12 58.5 10 55 10.2 51 C10.5 47 13 43 16.3 39.1 C19 35 20.5 30 21.5 26 C21 21 21.5 15.5 22.8 12 C26.5 14 29 17 30.5 20.8 C31.5 20 32.5 20 33.5 20.8 C33.5 17 35 13.5 36.8 11.6 C39.3 14 40.8 17.5 40.5 20.5 C54 18.5 64 28 67 44.7 C69 53 70.3 62 70.5 72.5 Z"/>
<g id="B"><circle cx="40.3" cy="17.2" r="4.8"/><path d="M29 47.5 C22.5 42 21.5 33 27 27.5 C31 23.5 36 22.5 38.5 21 L40.3 19.5 L42 21 C44.5 22.5 49.5 23.5 53.5 27.5 C59 33 58 42 51.5 47.5 Z"/><path d="M27 54 C27 49.5 33 47.8 40.3 47.8 C47.5 47.8 53.2 49.5 53.2 54 C53.2 58 47.5 59.5 40.3 59.5 C33 59.5 27 58 27 54 Z"/><path d="M40.3 59.5 C38.3 62.5 35 63.5 30 62.8 C25 62 18 61.5 11 65 L14.5 73 C19 70 25 69.5 31 70.5 C36 71.5 39.3 70.5 40.3 68.5 C41.3 70.5 44.5 71.5 49.5 70.5 C55.5 69.5 61.5 70 66 73 L69.8 65 C62.5 61.5 55.5 62 50.5 62.8 C45.5 63.5 42.3 62.5 40.3 59.5 Z"/></g>
<g id="Q"><path d="M11.2 24.7 L24 49 L24.7 17.7 L33.5 47 L40 16.3 L46.5 47 L55.4 17.7 L56 49 L68.9 24.7 L59.5 52.5 C58 55 58.5 58 60 60 C58 62 58 64 59.5 66 C61 67.5 61 71 59 72.5 C50 75 30 75 21 72.5 C19 71 19 67.5 20.5 66 C22 64 22 62 20 60 C21.5 58 22 55 20.5 52.5 Z"/><circle cx="11.2" cy="24.7" r="4"/><circle cx="24.7" cy="17.7" r="4"/><circle cx="40" cy="16.3" r="4"/><circle cx="55.4" cy="17.7" r="4"/><circle cx="68.9" cy="24.7" r="4"/></g>
<g id="K"><path d="M40 25.5 C42.5 25.5 44 28.5 43.8 32 C43.5 37 41.5 44 40.5 49 C45 38 51 31 58 30.7 C66 30.5 70 35 69.9 40 C69.8 46 66 52 59.5 57 L60 59 C61 61 60 63 59 64.5 C61 66 61.5 69 60.6 71 C53 74 27 74 19.2 71 C18.5 69 19 66 21 64.5 C20 63 19 61 20 59 L20.5 57 C14 52 10.2 46 10.1 40 C10 35 14 30.5 22 30.7 C29 31 35 38 39.5 49 C38.5 44 36.5 37 36.2 32 C36 28.5 37.5 25.5 40 25.5 Z"/><path d="M40 12.5 V25.5 M35.8 17.7 H44.5" fill="none" stroke-width="2.2"/></g>
</defs><g transform="translate(0 0)" filter="url(#sh)"><use href="#R" fill="url(#bk)" stroke="#0c0c0e" stroke-width="0.9"/><path d="M23.5 27 H56.5 M29.5 33 H50.5 M29.5 52.5 H50.5 M23.5 59 H56.5 M23.5 63 H56.5" stroke="#fff" stroke-width="1.5" fill="none"/></g><g transform="translate(0 80)" filter="url(#sh)"><use href="#P" fill="url(#bk)" stroke="#0c0c0e" stroke-width="0.9"/></g><g transform="translate(0 480)" filter="url(#sh)"><use href="#P" fill="url(#wh)" stroke="#0c0c0c" stroke-width="2.3"/></g><g transform="translate(0 560)" filter="url(#sh)"><use href="#R" fill="url(#wh)" stroke="#0c0c0c" stroke-width="2.3"/><path d="M21 27 H59 M28 30.5 H52 M28 56 H52 M22 59.5 H58 M22 64.5 H58" stroke="#111" stroke-width="1.7" fill="none"/></g><g transform="translate(80 0)" filter="url(#sh)"><use href="#N" fill="url(#bk)" stroke="#0c0c0e" stroke-width="0.9"/><path d="M45.5 22.5 C58 25 66 40 67.3 69.5" stroke="#fff" stroke-width="1.5" fill="none"/><path d="M26.2 23.6 L31.7 22 M44.8 34.4 L43.2 42.5 M16 47.5 L14.2 51.5 M21 53.5 L18.8 56.8 M24 31.5 C25 29.5 27 28.5 28.5 29" stroke="#fff" stroke-width="1.4" fill="none"/></g><g transform="translate(80 80)" filter="url(#sh)"><use href="#P" fill="url(#bk)" stroke="#0c0c0e" stroke-width="0.9"/></g><g transform="translate(80 480)" filter="url(#sh)"><use href="#P" fill="url(#wh)" stroke="#0c0c0c" stroke-width="2.3"/></g><g transform="translate(80 560)" filter="url(#sh)"><use href="#N" fill="url(#wh)" stroke="#0c0c0c" stroke-width="2.3"/><path d="M43.3 34.5 C44 39 43.5 42 42.5 45" stroke="#111" stroke-width="1.8" fill="none"/><path d="M24.5 32.5 C25.5 30 27.5 29 29 29.5 M14.2 51 L15.8 47.5 M18.2 57.5 L19.8 54" stroke="#111" stroke-width="1.6" fill="none"/><circle cx="26.5" cy="31.5" r="1.2" fill="#111"/></g><g transform="translate(160 0)" filter="url(#sh)"><use href="#B" fill="url(#bk)" stroke="#0c0c0e" stroke-width="0.9"/><path d="M40.3 28.5 V42.5 M33.5 35.5 H47 " stroke="#fff" stroke-width="1.9" fill="none"/><path d="M32 51.5 C36 49.3 44.5 49.3 48.5 51.5 M29 56.3 C35 53.8 45.5 53.8 51.5 56.3" stroke="#fff" stroke-width="1.5" fill="none"/><path d="M35.5 62 H39 M41.5 62 H45" stroke="#fff" stroke-width="1.6"/></g><g transform="translate(160 80)" filter="url(#sh)"><use href="#P" fill="url(#bk)" stroke="#0c0c0e" stroke-width="0.9"/></g><g transform="translate(160 480)" filter="url(#sh)"><use href="#P" fill="url(#wh)" stroke="#0c0c0c" stroke-width="2.3"/></g><g transform="translate(160 560)" filter="url(#sh)"><use href="#B" fill="url(#wh)" stroke="#0c0c0c" stroke-width="2.3"/><path d="M40.3 29.5 V41.5 M34.5 35.5 H46" stroke="#111" stroke-width="1.8" fill="none"/><path d="M28 54.5 C35 51.8 45.5 51.8 52.5 54.5" stroke="#111" stroke-width="1.7" fill="none"/></g><g transform="translate(240 0)" filter="url(#sh)"><use href="#Q" fill="url(#bk)" stroke="#0c0c0e" stroke-width="0.9"/><path d="M22.5 55.5 C33 52 47 52 57.5 55.5 M22 60.5 C33 57.5 47 57.5 58 60.5 M22 67.8 C33 65.2 47 65.2 58 67.8" stroke="#fff" stroke-width="1.5" fill="none"/></g><g transform="translate(240 80)" filter="url(#sh)"><use href="#P" fill="url(#bk)" stroke="#0c0c0e" stroke-width="0.9"/></g><g transform="translate(240 480)" filter="url(#sh)"><use href="#P" fill="url(#wh)" stroke="#0c0c0c" stroke-width="2.3"/></g><g transform="translate(240 560)" filter="url(#sh)"><use href="#Q" fill="url(#wh)" stroke="#0c0c0c" stroke-width="2.3"/><path d="M20.5 52.5 C32 48.5 48 48.5 59.5 52.5 M20 60 C32 56.5 48 56.5 60 60 M20.5 66 C32 63 48 63 59.5 66" stroke="#111" stroke-width="1.8" fill="none"/></g><g transform="translate(320 0)" filter="url(#sh)"><use href="#K" fill="url(#bk)" stroke="#0c0c0e" stroke-width="0.9"/><path d="M40 28.5 C41.5 28.5 42 31 41.5 34 C41 38 40.5 42 40 46 C39.5 42 39 38 38.5 34 C38 31 38.5 28.5 40 28.5 Z" stroke="#fff" stroke-width="1.3" fill="none"/><path d="M42 51 C46 40 52 34 58 33.5 C64 33.5 67 36.5 67 40.5 C67 46 63 51 58 55 M38 51 C34 40 28 34 22 33.5 C16 33.5 13 36.5 13 40.5 C13 46 17 51 22 55 M21.5 59 C32 56.5 48 56.5 58.5 59 M21.5 66 C32 63.5 48 63.5 58.5 66" stroke="#fff" stroke-width="1.4" fill="none"/></g><g transform="translate(320 80)" filter="url(#sh)"><use href="#P" fill="url(#bk)" stroke="#0c0c0e" stroke-width="0.9"/></g><g transform="translate(320 480)" filter="url(#sh)"><use href="#P" fill="url(#wh)" stroke="#0c0c0c" stroke-width="2.3"/></g><g transform="translate(320 560)" filter="url(#sh)"><use href="#K" fill="url(#wh)" stroke="#0c0c0c" stroke-width="2.3"/><path d="M40.5 49 V56 M20.5 57 C30 54 50 54 59.5 57 M20 59 C32 56 48 56 60 59 M21 64.5 C32 62 48 62 59 64.5" stroke="#111" stroke-width="1.8" fill="none"/></g><g transform="translate(400 0)" filter="url(#sh)"><use href="#B" fill="url(#bk)" stroke="#0c0c0e" stroke-width="0.9"/><path d="M40.3 28.5 V42.5 M33.5 35.5 H47 " stroke="#fff" stroke-width="1.9" fill="none"/><path d="M32 51.5 C36 49.3 44.5 49.3 48.5 51.5 M29 56.3 C35 53.8 45.5 53.8 51.5 56.3" stroke="#fff" stroke-width="1.5" fill="none"/><path d="M35.5 62 H39 M41.5 62 H45" stroke="#fff" stroke-width="1.6"/></g><g transform="translate(400 80)" filter="url(#sh)"><use href="#P" fill="url(#bk)" stroke="#0c0c0e" stroke-width="0.9"/></g><g transform="translate(400 480)" filter="url(#sh)"><use href="#P" fill="url(#wh)" stroke="#0c0c0c" stroke-width="2.3"/></g><g transform="translate(400 560)" filter="url(#sh)"><use href="#B" fill="url(#wh)" stroke="#0c0c0c" stroke-width="2.3"/><path d="M40.3 29.5 V41.5 M34.5 35.5 H46" stroke="#111" stroke-width="1.8" fill="none"/><path d="M28 54.5 C35 51.8 45.5 51.8 52.5 54.5" stroke="#111" stroke-width="1.7" fill="none"/></g><g transform="translate(480 0)" filter="url(#sh)"><use href="#N" fill="url(#bk)" stroke="#0c0c0e" stroke-width="0.9"/><path d="M45.5 22.5 C58 25 66 40 67.3 69.5" stroke="#fff" stroke-width="1.5" fill="none"/><path d="M26.2 23.6 L31.7 22 M44.8 34.4 L43.2 42.5 M16 47.5 L14.2 51.5 M21 53.5 L18.8 56.8 M24 31.5 C25 29.5 27 28.5 28.5 29" stroke="#fff" stroke-width="1.4" fill="none"/></g><g transform="translate(480 80)" filter="url(#sh)"><use href="#P" fill="url(#bk)" stroke="#0c0c0e" stroke-width="0.9"/></g><g transform="translate(480 480)" filter="url(#sh)"><use href="#P" fill="url(#wh)" stroke="#0c0c0c" stroke-width="2.3"/></g><g transform="translate(480 560)" filter="url(#sh)"><use href="#N" fill="url(#wh)" stroke="#0c0c0c" stroke-width="2.3"/><path d="M43.3 34.5 C44 39 43.5 42 42.5 45" stroke="#111" stroke-width="1.8" fill="none"/><path d="M24.5 32.5 C25.5 30 27.5 29 29 29.5 M14.2 51 L15.8 47.5 M18.2 57.5 L19.8 54" stroke="#111" stroke-width="1.6" fill="none"/><circle cx="26.5" cy="31.5" r="1.2" fill="#111"/></g><g transform="translate(560 0)" filter="url(#sh)"><use href="#R" fill="url(#bk)" stroke="#0c0c0e" stroke-width="0.9"/><path d="M23.5 27 H56.5 M29.5 33 H50.5 M29.5 52.5 H50.5 M23.5 59 H56.5 M23.5 63 H56.5" stroke="#fff" stroke-width="1.5" fill="none"/></g><g transform="translate(560 80)" filter="url(#sh)"><use href="#P" fill="url(#bk)" stroke="#0c0c0e" stroke-width="0.9"/></g><g transform="translate(560 480)" filter="url(#sh)"><use href="#P" fill="url(#wh)" stroke="#0c0c0c" stroke-width="2.3"/></g><g transform="translate(560 560)" filter="url(#sh)"><use href="#R" fill="url(#wh)" stroke="#0c0c0c" stroke-width="2.3"/><path d="M21 27 H59 M28 30.5 H52 M28 56 H52 M22 59.5 H58 M22 64.5 H58" stroke="#111" stroke-width="1.7" fill="none"/></g></svg>
<div class="a" style="left:58px;top:820px;width:6px;height:6px;background:#1a9a1a"></div>
<div class="a" style="left:707px;top:819px;width:8px;height:8px;border-radius:50%;background:#f4f4f4"></div>


<!-- RIGHT PANEL -->
<div class="a" style="left:767px;top:149px;width:6px;height:701px;background:#f0f0f0"></div>
<div class="a" style="left:772px;top:149px;width:1px;height:701px;background:#9a9a9a"></div>
<div class="a" style="left:1710px;top:149px;width:7px;height:701px;background:#eff0f2"></div>
<div class="a" style="left:773px;top:148px;width:937px;height:20px;background:linear-gradient(#cbd0dc,#c3d0de 15%,#b9c5d1 50%,#a9b4c1 95%)"></div>
<div class="t" style="left:777px;top:154px;color:#101828">Нотация + Книга</div>
<svg class="a" style="left:1678px;top:154px" width="30" height="10" viewBox="0 0 30 10"><path d="M1 2 H11 L6 7 Z" fill="#111"/><path d="M18 1 L26 9 M26 1 L18 9" stroke="#111" stroke-width="1.8"/></svg>
<div class="a" style="left:773px;top:168px;width:937px;height:28px;background:#fff"></div>
<div class="a" style="left:775px;top:191px;width:932px;height:1px;background:#c9cdd5"></div>
<div class="a" style="left:775px;top:191px;width:1px;height:5px;background:#c9cdd5"></div>
<div class="a" style="left:1706px;top:191px;width:1px;height:5px;background:#c9cdd5"></div>
<div class="a" style="left:834px;top:171px;width:107px;height:21px;border:1px solid #c9cdd5;border-bottom:none;background:#fff"></div>
<div class="t" style="left:781px;top:177px">Нотация</div>
<div class="t" style="left:840px;top:177px;color:#1e5b94">Справочная база</div>
<div class="t" style="left:946px;top:177px">Повтор обучения</div>
<div class="t" style="left:1055px;top:177px">Таблица</div>
<div class="t" style="left:1113px;top:177px">Проводник плана</div>
<div class="t" style="left:1223px;top:177px">Бланк партии</div>
<div class="t" style="left:1310px;top:177px">Живая книга</div>
<div class="t" style="left:1392px;top:177px">Книга</div>
<div class="t" style="left:1440px;top:177px">Мои ходы</div>
<div class="t" style="left:1507px;top:177px">Обзоры</div>

<!-- left table -->
<div class="a" style="left:773px;top:196px;width:374px;height:632px;background:#fff"></div>
<div class="a" style="left:773px;top:196px;width:374px;height:24px;background:#eff0f2;border-top:1px solid #c9cad2;border-bottom:1px solid #c9cad2"></div>
<div class="a" style="left:862px;top:197px;width:1px;height:22px;background:#c9cad2"></div>
<div class="a" style="left:918px;top:197px;width:1px;height:22px;background:#c9cad2"></div>
<div class="a" style="left:973px;top:197px;width:1px;height:22px;background:#c9cad2"></div>
<div class="a" style="left:1038px;top:197px;width:1px;height:22px;background:#c9cad2"></div>
<div class="a" style="left:1097px;top:197px;width:1px;height:22px;background:#c9cad2"></div>
<div class="t" style="left:777px;top:203px">Ходы</div>
<div class="t" style="left:867px;top:203px">Партии</div>
<div class="t" style="left:923px;top:203px">Очки</div>
<div class="t" style="left:978px;top:203px">Последн...</div>
<div class="t" style="left:1044px;top:203px">Свежий</div>
<div class="t" style="left:1103px;top:203px">Лучшие</div>
<!-- h scroll -->
<div class="a" style="left:773px;top:570px;width:374px;height:17px;background:#f0f0f0"></div>
<div class="a" style="left:790px;top:571px;width:180px;height:15px;background:#cdcdcd"></div>
<svg class="a" style="left:776px;top:573px" width="370" height="11" viewBox="0 0 370 11"><path d="M7.5 1.5 L3.5 5.5 L7.5 9.5" stroke="#3a3a3a" stroke-width="2.1" fill="none"/><path d="M360 1.5 L364 5.5 L360 9.5" stroke="#3a3a3a" stroke-width="2.1" fill="none"/></svg>

<div class="a" style="left:773px;top:587px;width:374px;height:5px;background:#f2f2f4"></div><div class="a" style="left:773px;top:592px;width:374px;height:1px;background:#8a8a8a"></div><div class="a" style="left:920px;top:588px;width:80px;height:3px;background:repeating-linear-gradient(90deg,#c8c8cc 0 3px,transparent 3px 5px)"></div>
<div class="a" style="left:773px;top:593px;width:374px;height:235px;background:#fff"></div>
<div class="a" style="left:775px;top:615px;width:371px;height:1px;background:#c9cdd5"></div>
<div class="a" style="left:1146px;top:615px;width:1px;height:213px;background:#a8a8a8"></div>
<div class="a" style="left:775px;top:595px;width:67px;height:21px;border:1px solid #c9cdd5;border-bottom:none;background:#fff"></div>
<div class="t" style="left:781px;top:601px;color:#1e5b94">Варианты</div>
<div class="t" style="left:847px;top:601px">Популярность</div>
<div class="t" style="left:939px;top:601px">Эндшпили</div>
<div class="a" style="left:1091px;top:619px;width:16px;height:209px;background:#ececf0"></div>
<svg class="a" style="left:1093px;top:623px" width="12" height="8"><path d="M1.5 7 L6 2.5 L10.5 7 Z" fill="#666"/></svg>
<svg class="a" style="left:1093px;top:816px" width="12" height="8"><path d="M1.5 1 L6 5.5 L10.5 1 Z" fill="#666"/></svg>
<div class="a" style="left:1095px;top:795px;width:8px;height:17px;background:#c8c8d8"></div>
<div class="a" style="left:1115px;top:623px;width:26px;height:24px;background:#e4e4e4;border:1px solid #bcbcbc"></div>
<div class="a" style="left:1115px;top:651px;width:26px;height:24px;background:#e4e4e4;border:1px solid #bcbcbc"></div>
<div class="a" style="left:1114px;top:678px;width:28px;height:26px;background:#f4f4f4;border:1px solid #bcbcbc"></div>
<div class="t" style="left:1121px;top:686px;font-size:11px;font-weight:bold;color:#222">...</div>
<svg class="a" style="left:1118px;top:626px" width="20" height="48" viewBox="0 0 20 48">
 <path d="M11.5 11.5 L17 17" stroke="#888" stroke-width="2.6" stroke-linecap="round"/><circle cx="7.5" cy="7.5" r="5.5" fill="#c8e8f0" stroke="#3cb83c" stroke-width="1.5"/><path d="M3 5 C4 2 8 1 11 3" stroke="#6ce06c" stroke-width="2" fill="none"/><path d="M7.5 4.5 V10.5 M4.5 7.5 H10.5" stroke="#333" stroke-width="1.2"/>
 <path d="M11.5 39.5 L17 45" stroke="#888" stroke-width="2.6" stroke-linecap="round"/><circle cx="7.5" cy="35.5" r="5.5" fill="#d8e070" stroke="#3cb83c" stroke-width="1.5"/><path d="M2.5 33 C3.5 30 8 29 12.5 32" stroke="#40e040" stroke-width="2.5" fill="none"/><path d="M4.5 35.5 H10.5" stroke="#333" stroke-width="1.2"/>
</svg>
<div class="a" style="left:773px;top:828px;width:374px;height:1px;background:#9a9a9a"></div>
<div class="a" style="left:773px;top:829px;width:374px;height:21px;background:#fff"></div>
<div class="a" style="left:773px;top:829px;width:1px;height:21px;background:#9a9a9a"></div>

<!-- splitter -->
<div class="a" style="left:768px;top:458px;width:3px;height:84px;background:repeating-linear-gradient(#bdbdbd 0 2px,#f4f4f4 2px 4px)"></div>
<div class="a" style="left:1147px;top:196px;width:5px;height:654px;background:#e8e8ea"></div>
<div class="a" style="left:1152px;top:195px;width:1px;height:655px;background:#6a6a6a"></div>
<div class="a" style="left:1148px;top:481px;width:3px;height:79px;background:repeating-linear-gradient(#bdbdbd 0 2px,#f0f0f0 2px 4px)"></div>

<!-- right table -->
<div class="a" style="left:1153px;top:195px;width:557px;height:430px;background:#fff"></div>
<div class="a" style="left:1153px;top:195px;width:557px;height:24px;background:#eff0f2;border-top:1px solid #c9cad2;border-bottom:1px solid #c9cad2"></div>
<div class="a" style="left:1249px;top:196px;width:1px;height:22px;background:#c9cad2"></div>
<div class="a" style="left:1290px;top:196px;width:1px;height:22px;background:#c9cad2"></div>
<div class="a" style="left:1387px;top:196px;width:1px;height:22px;background:#c9cad2"></div>
<div class="a" style="left:1428px;top:196px;width:1px;height:22px;background:#c9cad2"></div>
<div class="a" style="left:1490px;top:196px;width:1px;height:22px;background:#c9cad2"></div>
<div class="a" style="left:1566px;top:196px;width:1px;height:22px;background:#c9cad2"></div>
<div class="t" style="left:1157px;top:202px">Белые</div>
<div class="t" style="left:1254px;top:202px">Эло Б</div>
<div class="t" style="left:1295px;top:202px">Черные</div>
<div class="t" style="left:1391px;top:202px">Эло Ч</div>
<div class="t" style="left:1433px;top:202px">Результат</div>
<div class="t" style="left:1497px;top:202px">Год</div>
<div class="t" style="left:1570px;top:202px">Нотация</div>
<div class="a" style="left:1153px;top:619px;width:557px;height:17px;background:#f0f0f0"></div>
<div class="a" style="left:1170px;top:620px;width:366px;height:15px;background:#cdcdcd"></div>
<svg class="a" style="left:1156px;top:622px" width="552" height="11" viewBox="0 0 552 11"><path d="M7.5 1.5 L3.5 5.5 L7.5 9.5" stroke="#3a3a3a" stroke-width="2.1" fill="none"/><path d="M543 1.5 L547 5.5 L543 9.5" stroke="#3a3a3a" stroke-width="2.1" fill="none"/></svg>
<div class="a" style="left:1391px;top:637px;width:84px;height:3px;background:repeating-linear-gradient(90deg,#c8c8cc 0 3px,transparent 3px 5px)"></div>
<div class="a" style="left:1408px;top:641px;width:302px;height:1px;background:#8a8a8a"></div>

<!-- mini board -->
<div class="a wood" style="left:1153px;top:642px;width:250px;height:183px"></div>
<div class="a" style="left:1202px;top:652px;width:151px;height:152px;background:#6b191c;box-shadow:1px 1px 3px rgba(0,0,0,.4)"></div><div class="a" style="left:1205px;top:655px;width:144px;height:144px;background:repeating-linear-gradient(90deg,rgba(255,240,205,.55) 0 1px,transparent 1px 18px),repeating-linear-gradient(0deg,transparent 0 17px,rgba(255,240,205,.55) 17px 18px),repeating-conic-gradient(#c0632f 0 25%,#f1d9b3 0 50%) 0 0/36px 36px"></div><svg class="a" style="left:1205px;top:655px" width="144" height="144" viewBox="0 0 144 144"><g transform="translate(0 0) scale(0.225)" filter="url(#sh)"><use href="#R" fill="url(#bk)" stroke="#0c0c0e" stroke-width="0.9"/><path d="M23.5 27 H56.5 M29.5 33 H50.5 M29.5 52.5 H50.5 M23.5 59 H56.5 M23.5 63 H56.5" stroke="#fff" stroke-width="1.5" fill="none"/></g><g transform="translate(0 18) scale(0.225)" filter="url(#sh)"><use href="#P" fill="url(#bk)" stroke="#0c0c0e" stroke-width="0.9"/></g><g transform="translate(0 108) scale(0.225)" filter="url(#sh)"><use href="#P" fill="url(#wh)" stroke="#0c0c0c" stroke-width="2.3"/></g><g transform="translate(0 126) scale(0.225)" filter="url(#sh)"><use href="#R" fill="url(#wh)" stroke="#0c0c0c" stroke-width="2.3"/><path d="M21 27 H59 M28 30.5 H52 M28 56 H52 M22 59.5 H58 M22 64.5 H58" stroke="#111" stroke-width="1.7" fill="none"/></g><g transform="translate(18 0) scale(0.225)" filter="url(#sh)"><use href="#N" fill="url(#bk)" stroke="#0c0c0e" stroke-width="0.9"/><path d="M45.5 22.5 C58 25 66 40 67.3 69.5" stroke="#fff" stroke-width="1.5" fill="none"/><path d="M26.2 23.6 L31.7 22 M44.8 34.4 L43.2 42.5 M16 47.5 L14.2 51.5 M21 53.5 L18.8 56.8 M24 31.5 C25 29.5 27 28.5 28.5 29" stroke="#fff" stroke-width="1.4" fill="none"/></g><g transform="translate(18 18) scale(0.225)" filter="url(#sh)"><use href="#P" fill="url(#bk)" stroke="#0c0c0e" stroke-width="0.9"/></g><g transform="translate(18 108) scale(0.225)" filter="url(#sh)"><use href="#P" fill="url(#wh)" stroke="#0c0c0c" stroke-width="2.3"/></g><g transform="translate(18 126) scale(0.225)" filter="url(#sh)"><use href="#N" fill="url(#wh)" stroke="#0c0c0c" stroke-width="2.3"/><path d="M43.3 34.5 C44 39 43.5 42 42.5 45" stroke="#111" stroke-width="1.8" fill="none"/><path d="M24.5 32.5 C25.5 30 27.5 29 29 29.5 M14.2 51 L15.8 47.5 M18.2 57.5 L19.8 54" stroke="#111" stroke-width="1.6" fill="none"/><circle cx="26.5" cy="31.5" r="1.2" fill="#111"/></g><g transform="translate(36 0) scale(0.225)" filter="url(#sh)"><use href="#B" fill="url(#bk)" stroke="#0c0c0e" stroke-width="0.9"/><path d="M40.3 28.5 V42.5 M33.5 35.5 H47 " stroke="#fff" stroke-width="1.9" fill="none"/><path d="M32 51.5 C36 49.3 44.5 49.3 48.5 51.5 M29 56.3 C35 53.8 45.5 53.8 51.5 56.3" stroke="#fff" stroke-width="1.5" fill="none"/><path d="M35.5 62 H39 M41.5 62 H45" stroke="#fff" stroke-width="1.6"/></g><g transform="translate(36 18) scale(0.225)" filter="url(#sh)"><use href="#P" fill="url(#bk)" stroke="#0c0c0e" stroke-width="0.9"/></g><g transform="translate(36 108) scale(0.225)" filter="url(#sh)"><use href="#P" fill="url(#wh)" stroke="#0c0c0c" stroke-width="2.3"/></g><g transform="translate(36 126) scale(0.225)" filter="url(#sh)"><use href="#B" fill="url(#wh)" stroke="#0c0c0c" stroke-width="2.3"/><path d="M40.3 29.5 V41.5 M34.5 35.5 H46" stroke="#111" stroke-width="1.8" fill="none"/><path d="M28 54.5 C35 51.8 45.5 51.8 52.5 54.5" stroke="#111" stroke-width="1.7" fill="none"/></g><g transform="translate(54 0) scale(0.225)" filter="url(#sh)"><use href="#Q" fill="url(#bk)" stroke="#0c0c0e" stroke-width="0.9"/><path d="M22.5 55.5 C33 52 47 52 57.5 55.5 M22 60.5 C33 57.5 47 57.5 58 60.5 M22 67.8 C33 65.2 47 65.2 58 67.8" stroke="#fff" stroke-width="1.5" fill="none"/></g><g transform="translate(54 18) scale(0.225)" filter="url(#sh)"><use href="#P" fill="url(#bk)" stroke="#0c0c0e" stroke-width="0.9"/></g><g transform="translate(54 108) scale(0.225)" filter="url(#sh)"><use href="#P" fill="url(#wh)" stroke="#0c0c0c" stroke-width="2.3"/></g><g transform="translate(54 126) scale(0.225)" filter="url(#sh)"><use href="#Q" fill="url(#wh)" stroke="#0c0c0c" stroke-width="2.3"/><path d="M20.5 52.5 C32 48.5 48 48.5 59.5 52.5 M20 60 C32 56.5 48 56.5 60 60 M20.5 66 C32 63 48 63 59.5 66" stroke="#111" stroke-width="1.8" fill="none"/></g><g transform="translate(72 0) scale(0.225)" filter="url(#sh)"><use href="#K" fill="url(#bk)" stroke="#0c0c0e" stroke-width="0.9"/><path d="M40 28.5 C41.5 28.5 42 31 41.5 34 C41 38 40.5 42 40 46 C39.5 42 39 38 38.5 34 C38 31 38.5 28.5 40 28.5 Z" stroke="#fff" stroke-width="1.3" fill="none"/><path d="M42 51 C46 40 52 34 58 33.5 C64 33.5 67 36.5 67 40.5 C67 46 63 51 58 55 M38 51 C34 40 28 34 22 33.5 C16 33.5 13 36.5 13 40.5 C13 46 17 51 22 55 M21.5 59 C32 56.5 48 56.5 58.5 59 M21.5 66 C32 63.5 48 63.5 58.5 66" stroke="#fff" stroke-width="1.4" fill="none"/></g><g transform="translate(72 18) scale(0.225)" filter="url(#sh)"><use href="#P" fill="url(#bk)" stroke="#0c0c0e" stroke-width="0.9"/></g><g transform="translate(72 108) scale(0.225)" filter="url(#sh)"><use href="#P" fill="url(#wh)" stroke="#0c0c0c" stroke-width="2.3"/></g><g transform="translate(72 126) scale(0.225)" filter="url(#sh)"><use href="#K" fill="url(#wh)" stroke="#0c0c0c" stroke-width="2.3"/><path d="M40.5 49 V56 M20.5 57 C30 54 50 54 59.5 57 M20 59 C32 56 48 56 60 59 M21 64.5 C32 62 48 62 59 64.5" stroke="#111" stroke-width="1.8" fill="none"/></g><g transform="translate(90 0) scale(0.225)" filter="url(#sh)"><use href="#B" fill="url(#bk)" stroke="#0c0c0e" stroke-width="0.9"/><path d="M40.3 28.5 V42.5 M33.5 35.5 H47 " stroke="#fff" stroke-width="1.9" fill="none"/><path d="M32 51.5 C36 49.3 44.5 49.3 48.5 51.5 M29 56.3 C35 53.8 45.5 53.8 51.5 56.3" stroke="#fff" stroke-width="1.5" fill="none"/><path d="M35.5 62 H39 M41.5 62 H45" stroke="#fff" stroke-width="1.6"/></g><g transform="translate(90 18) scale(0.225)" filter="url(#sh)"><use href="#P" fill="url(#bk)" stroke="#0c0c0e" stroke-width="0.9"/></g><g transform="translate(90 108) scale(0.225)" filter="url(#sh)"><use href="#P" fill="url(#wh)" stroke="#0c0c0c" stroke-width="2.3"/></g><g transform="translate(90 126) scale(0.225)" filter="url(#sh)"><use href="#B" fill="url(#wh)" stroke="#0c0c0c" stroke-width="2.3"/><path d="M40.3 29.5 V41.5 M34.5 35.5 H46" stroke="#111" stroke-width="1.8" fill="none"/><path d="M28 54.5 C35 51.8 45.5 51.8 52.5 54.5" stroke="#111" stroke-width="1.7" fill="none"/></g><g transform="translate(108 0) scale(0.225)" filter="url(#sh)"><use href="#N" fill="url(#bk)" stroke="#0c0c0e" stroke-width="0.9"/><path d="M45.5 22.5 C58 25 66 40 67.3 69.5" stroke="#fff" stroke-width="1.5" fill="none"/><path d="M26.2 23.6 L31.7 22 M44.8 34.4 L43.2 42.5 M16 47.5 L14.2 51.5 M21 53.5 L18.8 56.8 M24 31.5 C25 29.5 27 28.5 28.5 29" stroke="#fff" stroke-width="1.4" fill="none"/></g><g transform="translate(108 18) scale(0.225)" filter="url(#sh)"><use href="#P" fill="url(#bk)" stroke="#0c0c0e" stroke-width="0.9"/></g><g transform="translate(108 108) scale(0.225)" filter="url(#sh)"><use href="#P" fill="url(#wh)" stroke="#0c0c0c" stroke-width="2.3"/></g><g transform="translate(108 126) scale(0.225)" filter="url(#sh)"><use href="#N" fill="url(#wh)" stroke="#0c0c0c" stroke-width="2.3"/><path d="M43.3 34.5 C44 39 43.5 42 42.5 45" stroke="#111" stroke-width="1.8" fill="none"/><path d="M24.5 32.5 C25.5 30 27.5 29 29 29.5 M14.2 51 L15.8 47.5 M18.2 57.5 L19.8 54" stroke="#111" stroke-width="1.6" fill="none"/><circle cx="26.5" cy="31.5" r="1.2" fill="#111"/></g><g transform="translate(126 0) scale(0.225)" filter="url(#sh)"><use href="#R" fill="url(#bk)" stroke="#0c0c0e" stroke-width="0.9"/><path d="M23.5 27 H56.5 M29.5 33 H50.5 M29.5 52.5 H50.5 M23.5 59 H56.5 M23.5 63 H56.5" stroke="#fff" stroke-width="1.5" fill="none"/></g><g transform="translate(126 18) scale(0.225)" filter="url(#sh)"><use href="#P" fill="url(#bk)" stroke="#0c0c0e" stroke-width="0.9"/></g><g transform="translate(126 108) scale(0.225)" filter="url(#sh)"><use href="#P" fill="url(#wh)" stroke="#0c0c0c" stroke-width="2.3"/></g><g transform="translate(126 126) scale(0.225)" filter="url(#sh)"><use href="#R" fill="url(#wh)" stroke="#0c0c0c" stroke-width="2.3"/><path d="M21 27 H59 M28 30.5 H52 M28 56 H52 M22 59.5 H58 M22 64.5 H58" stroke="#111" stroke-width="1.7" fill="none"/></g></svg>
<div class="a" style="left:1403px;top:642px;width:5px;height:183px;background:#fff"></div>

<div class="a" style="left:1408px;top:642px;width:302px;height:183px;background:#fff"></div>
<div class="a" style="left:1405px;top:690px;width:2px;height:90px;background:repeating-linear-gradient(#c8c8c8 0 2px,transparent 2px 4px)"></div>
<div class="a" style="left:1408px;top:642px;width:1px;height:183px;background:#9a9a9a"></div>
<div class="a" style="left:1409px;top:685px;width:301px;height:1px;background:#1a2060"></div>
<div class="a" style="left:1693px;top:686px;width:17px;height:112px;background:#ececf0"></div>
<svg class="a" style="left:1695px;top:689px" width="12" height="8"><path d="M1.5 7 L6 2.5 L10.5 7 Z" fill="#666"/></svg>
<svg class="a" style="left:1695px;top:786px" width="12" height="8"><path d="M1.5 1 L6 5.5 L10.5 1 Z" fill="#666"/></svg>
<div class="a" style="left:1697px;top:763px;width:8px;height:17px;background:#c8c8d8"></div>
<div class="a" style="left:1409px;top:801px;width:301px;height:2px;background:#000"></div>
<div class="a" style="left:1409px;top:825px;width:301px;height:1px;background:#9a9a9a"></div>

<!-- toolbar -->
<div class="a" style="left:1153px;top:826px;width:557px;height:24px;background:#fff"></div>
<div class="a" style="left:1153px;top:825px;width:250px;height:1px;background:#fff"></div>
<div class="a" style="left:1156px;top:827px;width:2px;height:21px;background:repeating-linear-gradient(#c0c0c0 0 2px,transparent 2px 4px)"></div>
<svg class="a" style="left:1165px;top:829px" width="470" height="18" viewBox="0 0 470 18">
 <path d="M2 2 H13 L9 7 V11 L7 12 V7 Z" fill="#8ab0d0" stroke="#333" stroke-width=".8"/><rect x="7.5" y="6.5" width="10" height="10" fill="#fff" stroke="#222"/><path d="M10 10 H12 M14 10 H16 M10 14 H12 M14 14 H16" stroke="#222" stroke-width="1.2"/>
 <rect x="75.5" y="2.5" width="8" height="10" fill="#fff" stroke="#333"/><path d="M77 5 H82 M77 8 H82" stroke="#333"/><rect x="80.5" y="6.5" width="8" height="10" fill="#fff" stroke="#333"/><path d="M82 9 H87 M82 12 H87 M82 14 H86" stroke="#333"/>
 <rect x="171.5" y="5.5" width="9" height="11" fill="#fff" stroke="#333"/><path d="M173 8 H175 M173 11 H175 M173 14 H175" stroke="#1a3a9a" stroke-width="1.4"/><path d="M174 5 C176 1 182 1 184 4" stroke="#1a3a9a" stroke-width="1.2" fill="none"/><rect x="182" y="2" width="3" height="5" fill="#1a3a9a"/>
 <rect x="258.5" y="2.5" width="10" height="14" rx="1" fill="#c8e4e0" stroke="#444"/><rect x="261" y="1" width="5" height="3" fill="#666"/><path d="M260 7 H267 M260 10 H267 M260 13 H267" stroke="#5a9a90"/>
 <path d="M324 4 L333 15 M333 4 L324 15" stroke="#d82020" stroke-width="2"/>
 <rect x="396.5" y="2.5" width="13" height="13" rx="2.5" fill="#e02020" stroke="#901010"/><path d="M400 6 L406 12 M406 6 L400 12" stroke="#fff" stroke-width="1.6"/>
</svg>
<div class="t" style="left:1187px;top:833px">Фильтр</div>
<div class="t" style="left:1259px;top:833px">Копировать</div>
<div class="t" style="left:1355px;top:833px">Изменить</div>
<div class="t" style="left:1440px;top:833px">Буфер</div>
<div class="t" style="left:1505px;top:833px">Удалить</div>
<div class="t" style="left:1581px;top:833px">Стоп</div>
<div class="a" style="left:1632px;top:832px;width:11px;height:11px;border:1px solid #8a8a8a;background:#fff"></div>
<div class="t" style="left:1646px;top:832px">Лучшие</div>

<!-- STATUS -->
<div class="a" id="status"></div>
<div class="t" style="left:18px;top:858px;color:#fff;font-size:11.15px">C:\Users\SamDel\Documents\ChessBase\Training</div>
<div class="a" style="left:1484px;top:857px;width:222px;height:13px;background:#fff"></div>
<div class="t" style="left:1487px;top:859px;font-size:10px;color:#111">0%</div>
<div class="a" style="left:1523px;top:860px;width:134px;height:7px;background:#dcdcdc;border-right:1px solid #999;border-bottom:1px solid #999"></div>
<div class="a" id="status2"></div>
</body></html>
